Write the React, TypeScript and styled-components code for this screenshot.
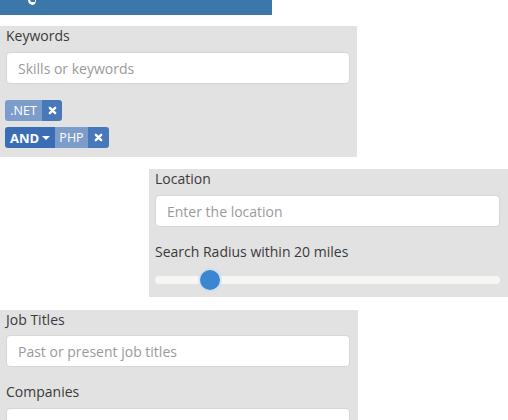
import React from "react";
import styled, { createGlobalStyle } from "styled-components";

const Global = createGlobalStyle`
  html, body { margin: 0; padding: 0; background: #fff; overflow: hidden; }
  body { font-family: "Open Sans", "Liberation Sans", sans-serif; font-size: 14px; color: #333; }
  * { box-sizing: border-box; }
`;

const Page = styled.div`
  display: flex;
  flex-direction: column;
  align-items: flex-start;
  width: 508px;
`;

const TopBar = styled.div`
  width: 272px;
  height: 15px;
  background: #3b78a9;
  overflow: hidden;
  padding-left: 27px;
`;

const Panel = styled.div<{ $left?: number; $width: number; $top: number; $right: number }>`
  margin-top: ${(p) => p.$top}px;
  margin-left: ${(p) => p.$left ?? 0}px;
  width: ${(p) => p.$width}px;
  background: #e2e2e2;
  padding: 0 ${(p) => p.$right}px 9px 6px;
  display: flex;
  flex-direction: column;
`;

const Label = styled.div<{ $gap?: number; $after?: number }>`
  line-height: 20px;
  margin-top: ${(p) => p.$gap ?? 0}px;
  margin-bottom: ${(p) => p.$after ?? 6}px;
  color: #3a3a3a;
`;

const Input = styled.input`
  display: block;
  width: 100%;
  height: 32px;
  border: 1px solid #d6d6d6;
  border-radius: 4px;
  background: #fff;
  padding: 0 11px;
  font-family: inherit;
  font-size: 14px;
  color: #555;
  outline: none;
  &::placeholder { color: #9a9a9a; }
`;

const Tags = styled.div`
  margin-top: 16px;
  margin-left: -1px;
  display: flex;
  flex-direction: column;
  align-items: flex-start;
  gap: 6px;
`;

const TagGroup = styled.div`
  display: flex;
  height: 21px;
  border-radius: 3px;
  overflow: hidden;
`;

const TagPart = styled.span<{ $kind: "value" | "close" | "op"; $w: number }>`
  display: flex;
  align-items: center;
  justify-content: center;
  width: ${(p) => p.$w}px;
  color: #fff;
  font-size: ${(p) => (p.$kind === "op" ? 13 : 12.5)}px;
  font-weight: ${(p) => (p.$kind === "op" ? 700 : 400)};
  background: ${(p) =>
    p.$kind === "value" ? "#7c9dc9" : p.$kind === "close" ? "#4878ba" : "#3b6db5"};
  gap: 3px;
`;

const Caret = styled.span`
  width: 0;
  height: 0;
  border-left: 4px solid transparent;
  border-right: 4px solid transparent;
  border-top: 4px solid #fff;
  margin-top: 1px;
`;

const SliderTrack = styled.div`
  position: relative;
  margin-top: 8px;
  height: 8px;
  border-radius: 4px;
  background: #f6f6f4;
  margin-bottom: 4px;
`;

const SliderHandle = styled.div`
  position: absolute;
  top: -6px;
  width: 20px;
  height: 20px;
  border-radius: 50%;
  background: #3a86d2;
  box-shadow: 0 0 0 2px rgba(200, 220, 240, 0.6);
`;

const Times = () => (
  <svg width="9" height="9" viewBox="0 0 10 10">
    <path d="M2 2 L8 8 M8 2 L2 8" stroke="#fff" strokeWidth="2.6" strokeLinecap="round" />
  </svg>
);

export default function App() {
  const radius = 20;
  const pct = (radius / 125) * 100;
  return (
    <>
      <Global />
      <Page>
        <TopBar>
          <svg width="10" height="15" viewBox="0 0 10 15">
            <path d="M1 0 L3 0 L4 2 L8 2 L8 0 L9 0 L8.5 3 Q7 5.5 5 5 L3 4 L1.5 2.5 Z" fill="#fff" />
          </svg>
        </TopBar>

        <Panel $top={11} $width={357} $right={7}>
          <Label>Keywords</Label>
          <Input placeholder="Skills or keywords" />
          <Tags>
            <TagGroup>
              <TagPart $kind="value" $w={37}>.NET</TagPart>
              <TagPart $kind="close" $w={20}><Times /></TagPart>
            </TagGroup>
            <TagGroup>
              <TagPart $kind="op" $w={50}>AND<Caret /></TagPart>
              <TagPart $kind="value" $w={33}>PHP</TagPart>
              <TagPart $kind="close" $w={21}><Times /></TagPart>
            </TagGroup>
          </Tags>
        </Panel>

        <Panel $top={12} $left={149} $width={359} $right={8}>
          <Label>Location</Label>
          <Input placeholder="Enter the location" />
          <Label $gap={15}>Search Radius within {radius} miles</Label>
          <SliderTrack>
            <SliderHandle style={{ left: `calc(${pct}% - 10px)` }} />
          </SliderTrack>
        </Panel>

        <Panel $top={13} $width={358} $right={8}>
          <Label $after={5}>Job Titles</Label>
          <Input placeholder="Past or present job titles" />
          <Label $gap={15}>Companies</Label>
          <Input placeholder="" />
        </Panel>
      </Page>
    </>
  );
}
